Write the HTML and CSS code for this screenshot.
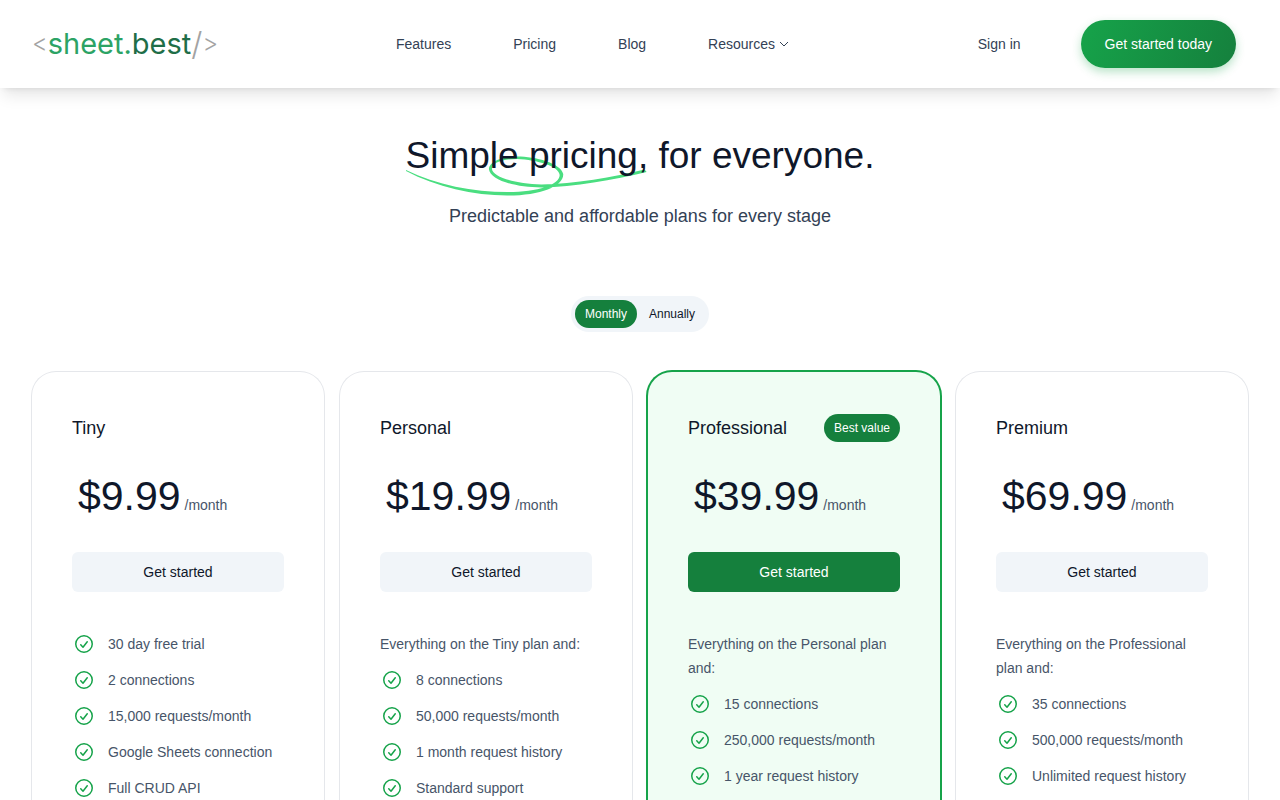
FILE: index.html
```html
<!DOCTYPE html>
<html lang="en">
<head>
    <meta charset="UTF-8">
    <meta name="viewport" content="width=device-width, initial-scale=1.0">
    <title>Pricing - sheet.best</title>
    <link rel="stylesheet" href="styles.css">
</head>
<body>
    <svg class="sprite" aria-hidden="true">
        <symbol id="check" viewBox="0 0 24 24">
            <path fill="currentColor" d="M9.307 12.248a.75.75 0 1 0-1.114 1.004l1.114-1.004ZM11 15.25l-.557.502a.75.75 0 0 0 1.15-.043L11 15.25Zm4.844-5.041a.75.75 0 0 0-1.188-.918l1.188.918Zm-7.651 3.043 2.25 2.5 1.114-1.004-2.25-2.5-1.114 1.004Zm3.4 2.457 4.25-5.5-1.187-.918-4.25 5.5 1.188.918Z"/>
            <circle cx="12" cy="12" r="8.25" fill="none" stroke="currentColor" stroke-width="1.5"/>
        </symbol>
    </svg>

    <header class="header">
        <a class="logo" href="#"><span class="tag">&lt;</span><span class="sheet">sheet.</span><span class="best">best</span><span class="slash">/</span><span class="tag">&gt;</span></a>
        <nav class="nav">
            <a href="#">Features</a>
            <a href="#">Pricing</a>
            <a href="#">Blog</a>
            <button class="resources" type="button">Resources
                <svg class="chevron" viewBox="0 0 10 10" aria-hidden="true"><path d="M1 3l4 4 4-4"/></svg>
            </button>
        </nav>
        <div class="actions">
            <a href="#">Sign in</a>
            <a class="cta" href="#">Get started today</a>
        </div>
    </header>

    <main class="pricing">
        <h1 class="title">
            <span class="marked">
                <svg class="swoosh" viewBox="0 0 240 40" preserveAspectRatio="none" aria-hidden="true">
                    <path d="M0 15C30 31 67 39.500 100 39.500C133 39.500 156 30 155.500 18C153 7 128 0.500 110 0.500C94 0.500 82 6 82 13C83 24 108 31.500 134 31.500C166 31 205 24 238 16L236 13.500C205 21 166 28 134 28.500C108 28 86 21 85 13C85 7 95 3 110 3C130 4 151 10 152 19C152 29 130 36 100 36C67 36 30 29 0 14Z"/>
                </svg>
                <span class="words">Simple pricing,</span>
            </span>
            for everyone.
        </h1>
        <p class="subtitle">Predictable and affordable plans for every stage</p>

        <div class="period">
            <input type="radio" name="period" id="monthly" checked>
            <label for="monthly">Monthly</label>
            <input type="radio" name="period" id="annually">
            <label for="annually">Annually</label>
        </div>

        <div class="plans">
            <section class="plan">
                <div class="plan-head"><h2>Tiny</h2></div>
                <p class="price"><span class="amount">$9.99</span> <span class="unit">/month</span></p>
                <button class="start" type="button">Get started</button>
                <ul class="features">
                    <li><svg class="check"><use href="#check"/></svg>30 day free trial</li>
                    <li><svg class="check"><use href="#check"/></svg>2 connections</li>
                    <li><svg class="check"><use href="#check"/></svg>15,000 requests/month</li>
                    <li><svg class="check"><use href="#check"/></svg>Google Sheets connection</li>
                    <li><svg class="check"><use href="#check"/></svg>Full CRUD API</li>
                </ul>
            </section>

            <section class="plan">
                <div class="plan-head"><h2>Personal</h2></div>
                <p class="price"><span class="amount">$19.99</span> <span class="unit">/month</span></p>
                <button class="start" type="button">Get started</button>
                <p class="includes">Everything on the Tiny plan and:</p>
                <ul class="features">
                    <li><svg class="check"><use href="#check"/></svg>8 connections</li>
                    <li><svg class="check"><use href="#check"/></svg>50,000 requests/month</li>
                    <li><svg class="check"><use href="#check"/></svg>1 month request history</li>
                    <li><svg class="check"><use href="#check"/></svg>Standard support</li>
                </ul>
            </section>

            <section class="plan best-plan">
                <div class="plan-head"><h2>Professional</h2><span class="badge">Best value</span></div>
                <p class="price"><span class="amount">$39.99</span> <span class="unit">/month</span></p>
                <button class="start" type="button">Get started</button>
                <p class="includes">Everything on the Personal plan and:</p>
                <ul class="features">
                    <li><svg class="check"><use href="#check"/></svg>15 connections</li>
                    <li><svg class="check"><use href="#check"/></svg>250,000 requests/month</li>
                    <li><svg class="check"><use href="#check"/></svg>1 year request history</li>
                </ul>
            </section>

            <section class="plan">
                <div class="plan-head"><h2>Premium</h2></div>
                <p class="price"><span class="amount">$69.99</span> <span class="unit">/month</span></p>
                <button class="start" type="button">Get started</button>
                <p class="includes">Everything on the Professional plan and:</p>
                <ul class="features">
                    <li><svg class="check"><use href="#check"/></svg>35 connections</li>
                    <li><svg class="check"><use href="#check"/></svg>500,000 requests/month</li>
                    <li><svg class="check"><use href="#check"/></svg>Unlimited request history</li>
                </ul>
            </section>
        </div>
    </main>
</body>
</html>
```
FILE: styles.css
```css
* {
    margin: 0;
    padding: 0;
    box-sizing: border-box;
}
body {
    font-family: "Liberation Sans", Arial, sans-serif;
    font-size: 14px;
    line-height: 24px;
    color: #0f172a;
    background-color: #fff;
}
a {
    color: inherit;
    text-decoration: none;
}
button {
    font: inherit;
    color: inherit;
    border: none;
    background: none;
    cursor: pointer;
}
h1, h2 {
    font-weight: 400;
}
ul {
    list-style: none;
}
.sprite {
    display: none;
}

/* header */
.header {
    display: flex;
    align-items: center;
    padding: 20px 44px 20px 32px;
    color: #334155;
    box-shadow: 0 10px 15px -3px rgba(0, 0, 0, 0.1), 0 4px 6px -4px rgba(0, 0, 0, 0.1);
}
.logo {
    display: flex;
    align-items: center;
    flex: none;
    width: 188px;
    margin-right: 176px;
    font-family: Inter, sans-serif;
    font-size: 29px;
    line-height: 36px;
}
.logo .tag {
    font-size: 24px;
    font-weight: 300;
    color: #a3a3a3;
}
.logo .slash {
    font-size: 32px;
    font-weight: 300;
    color: #a3a3a3;
}
.logo .sheet {
    color: #2ca365;
}
.logo .best {
    color: #1f6e48;
}
.nav {
    display: flex;
    gap: 62px;
}
.resources {
    display: flex;
    align-items: center;
    gap: 4px;
}
.chevron {
    width: 10px;
    height: 10px;
    fill: none;
    stroke: #334155;
    stroke-width: 1;
}
.actions {
    display: flex;
    align-items: center;
    gap: 60px;
    margin-left: auto;
}
.cta {
    padding: 12px 24px;
    border-radius: 24px;
    color: #fff;
    background: linear-gradient(110deg, #16a34a, #15803d);
    box-shadow: 0 4px 10px rgba(22, 163, 74, 0.3);
}

/* heading */
.pricing {
    padding: 40px 32px;
}
.title {
    font-size: 37px;
    line-height: 56px;
    text-align: center;
}
.marked {
    position: relative;
    display: inline-block;
}
.swoosh {
    position: absolute;
    left: 0;
    top: 28px;
    width: 100%;
    height: 40px;
    fill: #4ade80;
}
.words {
    position: relative;
}
.subtitle {
    margin-top: 16px;
    font-size: 18px;
    line-height: 32px;
    text-align: center;
    color: #334155;
}

/* monthly / annually switch */
.period {
    display: flex;
    gap: 2px;
    width: fit-content;
    margin: 64px auto 40px;
    padding: 4px;
    border-radius: 18px;
    background-color: #f1f5f9;
    font-size: 12px;
    line-height: 28px;
}
.period input {
    position: absolute;
    opacity: 0;
}
.period label {
    padding: 0 10px;
    border-radius: 14px;
    cursor: pointer;
}
.period input:checked + label {
    color: #fff;
    background-color: #15803d;
}

/* plans */
.plans {
    display: grid;
    grid-template-columns: repeat(4, 1fr);
    gap: 16px;
}
.plan {
    padding: 40px;
    border-radius: 24px;
    box-shadow: 0 0 0 1px #e5e7eb;
}
.best-plan {
    background-color: #f0fdf4;
    box-shadow: 0 0 0 2px #16a34a;
}
.plan-head {
    display: flex;
    align-items: center;
    justify-content: space-between;
}
.plan h2 {
    font-size: 18px;
    line-height: 32px;
}
.badge {
    padding: 0 10px;
    border-radius: 14px;
    font-size: 12px;
    line-height: 28px;
    color: #fff;
    background-color: #15803d;
}
.price {
    margin: 28px 0 32px;
    padding-left: 6px;
    line-height: 24px;
}
.amount {
    font-size: 41px;
    line-height: 48px;
}
.unit {
    color: #475569;
}
.start {
    display: block;
    width: 100%;
    margin-bottom: 40px;
    padding: 8px;
    border-radius: 6px;
    background-color: #f1f5f9;
}
.best-plan .start {
    color: #fff;
    background-color: #15803d;
}
.includes {
    margin-bottom: 12px;
    color: #475569;
}
.features {
    display: grid;
    gap: 12px;
    color: #475569;
}
.features li {
    display: flex;
    gap: 12px;
}
.check {
    flex: none;
    width: 24px;
    height: 24px;
    color: #16a34a;
}
```
